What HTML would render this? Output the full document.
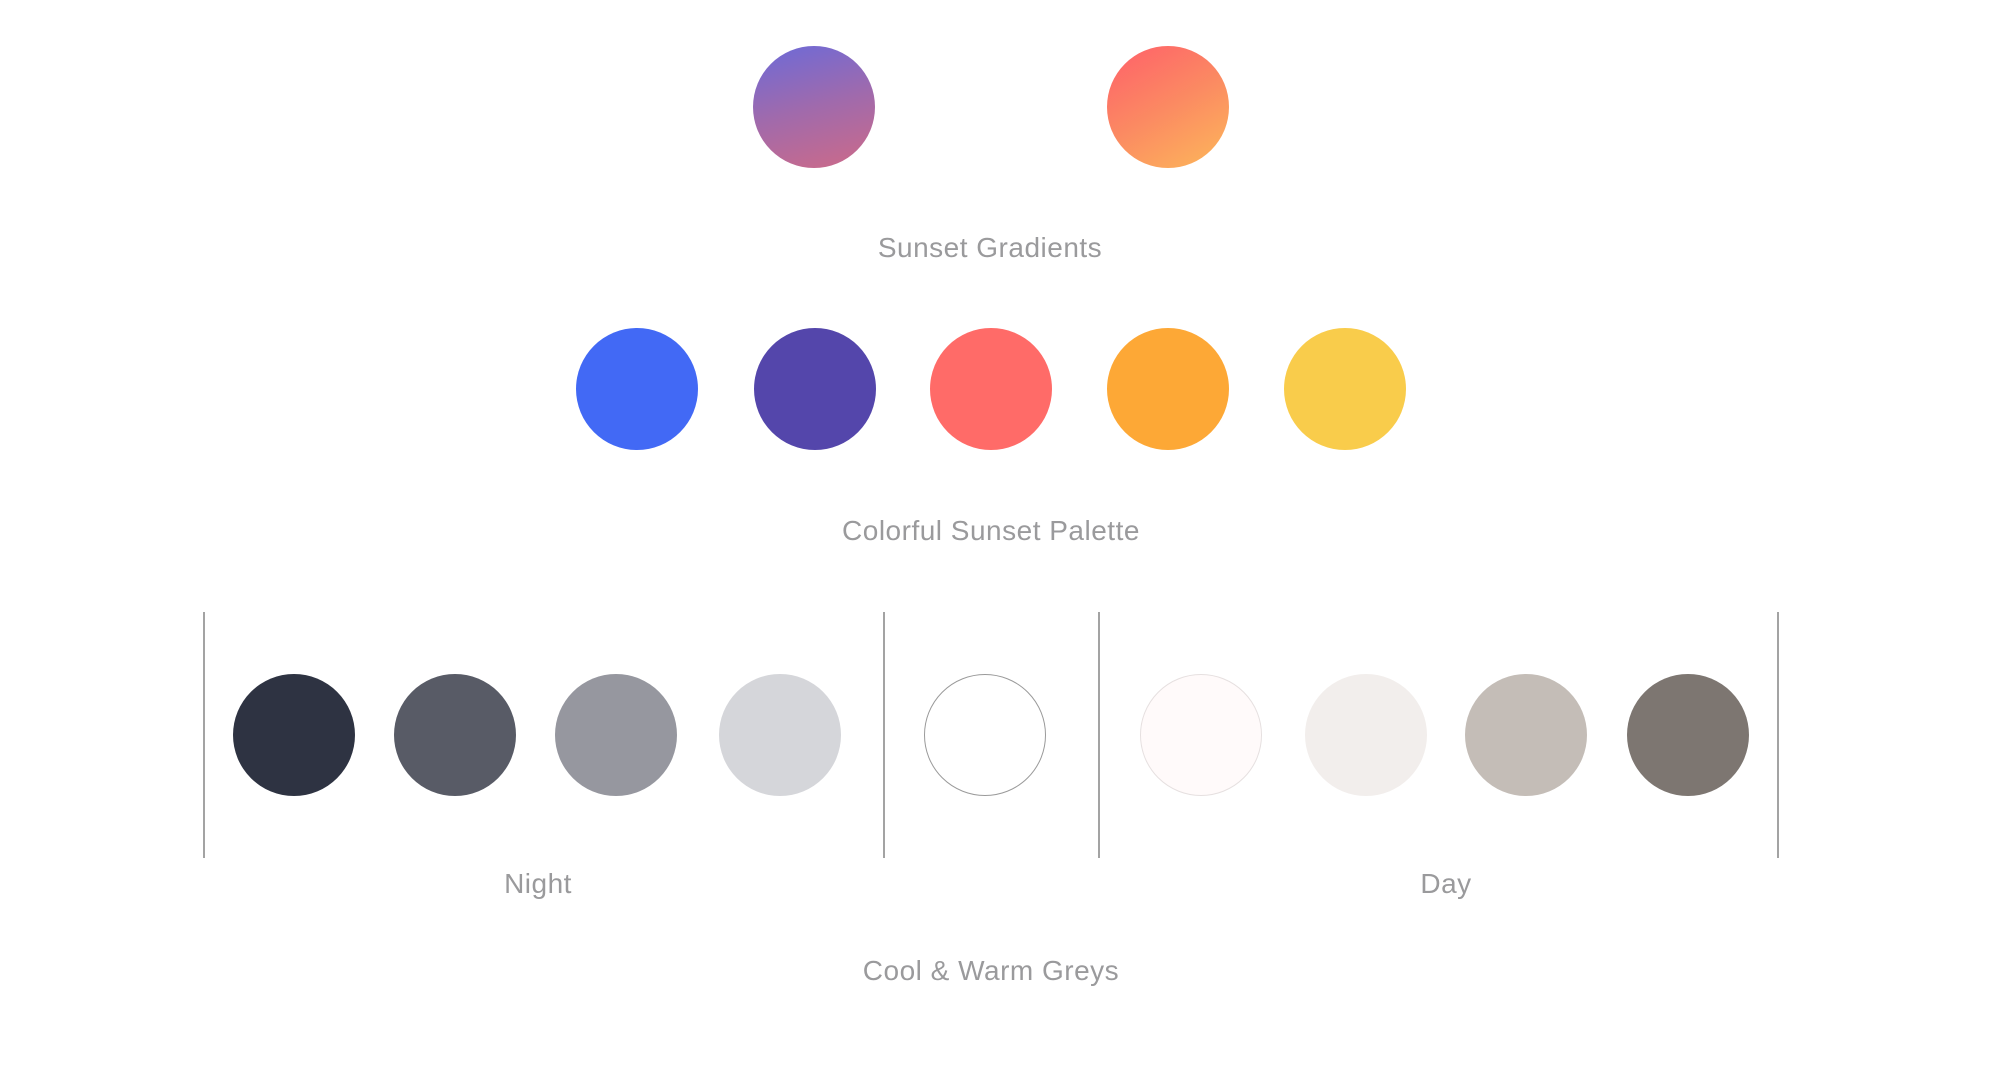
<!DOCTYPE html>
<html><head><meta charset="utf-8"><style>
html,body{margin:0;padding:0;background:#fff;}
body{width:2007px;height:1087px;position:relative;overflow:hidden;font-family:"Liberation Sans",sans-serif;}
.c{position:absolute;width:122px;height:122px;border-radius:50%;box-sizing:border-box;}
.t{position:absolute;width:600px;text-align:center;color:#9a9a9c;font-size:28px;line-height:28px;letter-spacing:0.5px;}
.l{position:absolute;width:2px;background:#a3a3a3;top:612px;height:246px;}
</style></head><body>
<div class="c" style="left:753px;top:46px;background:linear-gradient(165deg,#6c6ad8 0%,#a06aac 50%,#cd6a88 100%);"></div>
<div class="c" style="left:1107px;top:46px;background:linear-gradient(150deg,#ff5f6a 0%,#fb8a62 50%,#fdb85a 100%);"></div>
<div class="t" style="left:690px;top:234px;">Sunset Gradients</div>

<div class="c" style="left:576px;top:328px;background:#4269f5;"></div>
<div class="c" style="left:754px;top:328px;background:#5446ab;"></div>
<div class="c" style="left:930px;top:328px;background:#ff6b68;"></div>
<div class="c" style="left:1107px;top:328px;background:#fda836;"></div>
<div class="c" style="left:1284px;top:328px;background:#f9cc4b;"></div>
<div class="t" style="left:691px;top:517px;">Colorful Sunset Palette</div>

<div class="l" style="left:203px;"></div>
<div class="l" style="left:883px;"></div>
<div class="l" style="left:1098px;"></div>
<div class="l" style="left:1777px;"></div>

<div class="c" style="left:233px;top:674px;background:#2e3342;"></div>
<div class="c" style="left:394px;top:674px;background:#585b66;"></div>
<div class="c" style="left:555px;top:674px;background:#96979f;"></div>
<div class="c" style="left:719px;top:674px;background:#d5d6da;"></div>
<div class="c" style="left:924px;top:674px;background:#fff;border:1.5px solid #9a9a9a;"></div>
<div class="c" style="left:1140px;top:674px;background:#fffafa;border:1px solid #e6e0e0;"></div>
<div class="c" style="left:1305px;top:674px;background:#f2eeec;"></div>
<div class="c" style="left:1465px;top:674px;background:#c4bdb7;"></div>
<div class="c" style="left:1627px;top:674px;background:#7d7671;"></div>

<div class="t" style="left:238px;top:870px;">Night</div>
<div class="t" style="left:1146px;top:870px;">Day</div>
<div class="t" style="left:691px;top:957px;">Cool &amp; Warm Greys</div>
</body></html>
